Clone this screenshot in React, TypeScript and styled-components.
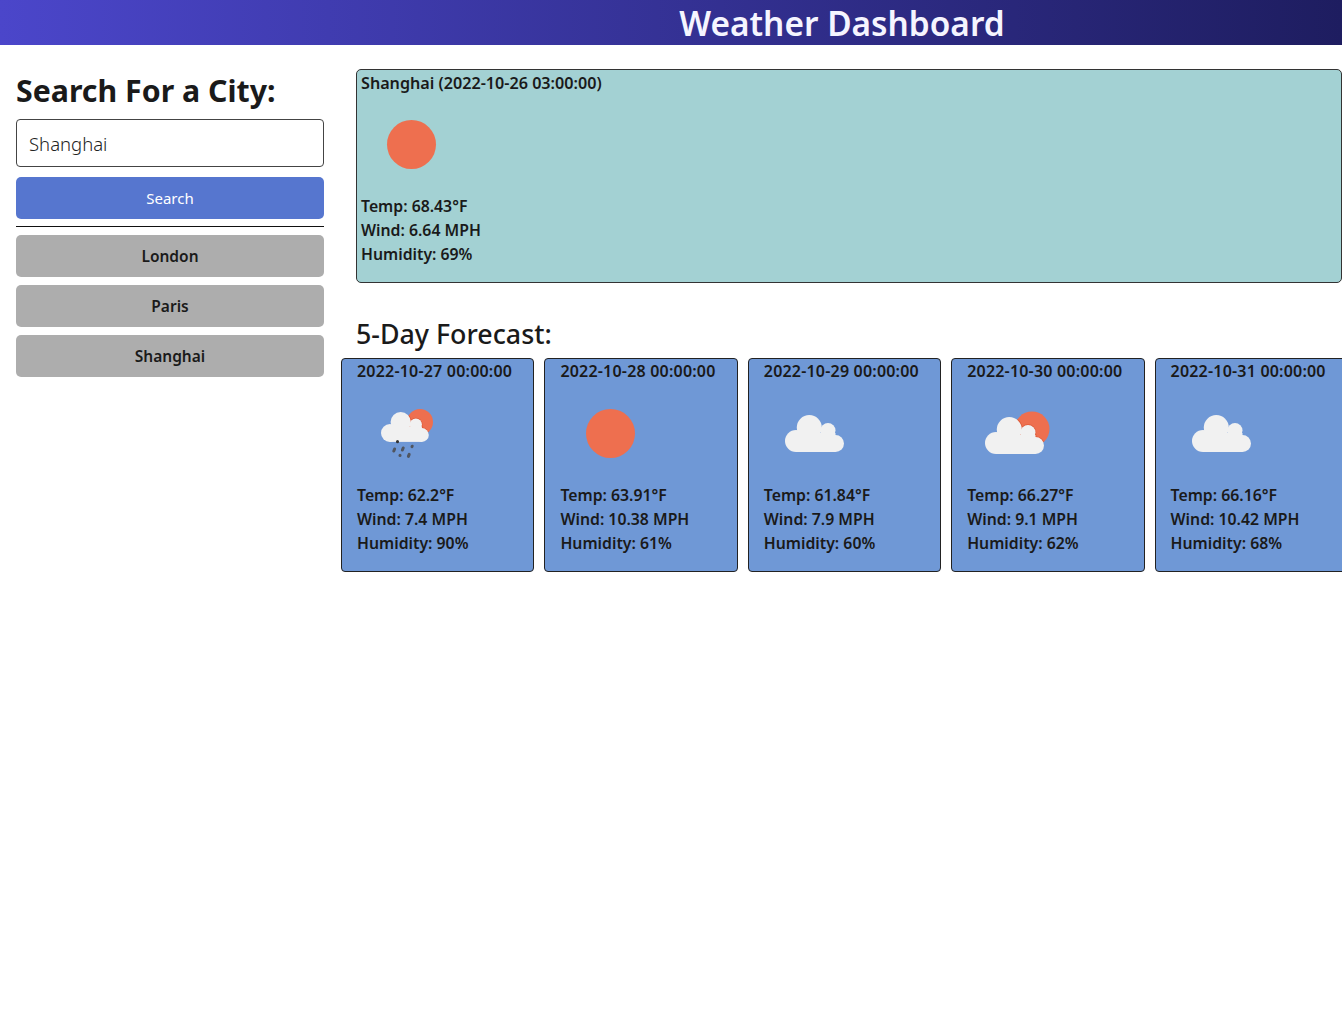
import React from "react";
import styled, { createGlobalStyle } from "styled-components";

const Global = createGlobalStyle`
  html, body { margin: 0; padding: 0; background: #fff; overflow-x: hidden; }
  body { font-family: "Noto Sans", "Open Sans", sans-serif; color: #1a1a1a; }
  * { box-sizing: border-box; }
`;

const Page = styled.div`
  width: 1342px;
  min-height: 1022px;
  overflow: hidden;
`;

const Header = styled.header`
  height: 45px;
  padding-left: 342px;
  display: flex;
  justify-content: center;
  align-items: center;
  background: linear-gradient(90deg, #4b46ca 0%, #1e1d60 100%);
`;

const Title = styled.h1`
  margin: 2px 0 0;
  font-size: 33.4px;
  line-height: 45px;
  font-weight: 600;
  color: #f5f5ff;
`;

const Layout = styled.div`
  display: grid;
  grid-template-columns: 341px 1008px;
  padding-top: 24px;
`;

const Sidebar = styled.aside`
  display: flex;
  flex-direction: column;
  width: 340px;
  padding: 0 16px;
`;

const SearchTitle = styled.h2`
  margin: 0 0 8px;
  height: 42px;
  font-size: 30.3px;
  line-height: 43px;
  font-weight: 700;
  white-space: nowrap;
`;

const CityInput = styled.input`
  height: 48px;
  width: 100%;
  padding: 0 12px;
  border: 1px solid #444;
  border-radius: 4px;
  font: 300 18.5px "Noto Sans", sans-serif;
  color: #222;
  background: #fff;
  outline: none;
`;

const SearchButton = styled.button`
  margin-top: 10px;
  height: 42px;
  border: 0;
  border-radius: 5px;
  background: #5676cf;
  color: #fff;
  font: 400 15px "Noto Sans", sans-serif;
`;

const Rule = styled.hr`
  width: 100%;
  margin: 7px 0 8px;
  border: 0;
  border-top: 1px solid #111;
`;

const CityList = styled.div`
  display: flex;
  flex-direction: column;
  gap: 8px;
`;

const CityButton = styled.button`
  height: 42px;
  border: 0;
  border-radius: 5px;
  background: #adadad;
  color: #1a1a1a;
  font: 600 15.5px "Noto Sans", sans-serif;
`;

const Main = styled.main`
  display: flex;
  flex-direction: column;
  min-width: 0;
`;

const TodayCard = styled.section`
  width: 986px;
  height: 214px;
  margin-left: 15px;
  padding: 0 4px;
  background: #a3d1d3;
  border: 1px solid #333;
  border-radius: 5px;
`;

const ForecastHeading = styled.h3`
  margin: 32px 0 4px 15px;
  height: 39px;
  font-size: 26.8px;
  line-height: 38px;
  font-weight: 500;
`;

const ForecastRow = styled.div`
  display: flex;
  gap: 10px;
`;

const ForecastCard = styled.article`
  flex: 0 0 193.4px;
  height: 214px;
  padding: 0 15px;
  background: #6f98d6;
  border: 1px solid #222;
  border-radius: 4px;
`;

const Line = styled.div`
  height: 24px;
  font-size: 15.8px;
  line-height: 24px;
  font-weight: 600;
  white-space: nowrap;
`;

const CityLine = styled(Line)`
  font-size: 16.15px;
  line-height: 26px;
`;

const DateLine = styled(Line)`
  font-size: 16px;
  letter-spacing: 0.2px;
`;

const IconSvg = styled.svg`
  display: block;
  width: 100px;
  height: 100px;
`;

const SUN = "#ee6f4f";
const EDGE = "#dd5a38";

const Sun = ({ cx = 50.5, cy = 50.5, r = 24.5 }: { cx?: number; cy?: number; r?: number }) => (
  <circle cx={cx} cy={cy} r={r} fill={SUN} />
);

const CloudShape = ({ transform }: { transform?: string }) => (
  <g transform={transform} fill="#f1f1f1">
    <circle cx="45.3" cy="44.5" r="12.5" />
    <circle cx="64" cy="47.5" r="7.5" />
    <circle cx="32" cy="58" r="11" />
    <circle cx="71.5" cy="60.5" r="8.5" />
    <rect x="32" y="50" width="39.5" height="19" />
  </g>
);

const SunBehindCloud = ({ id, cx, cy, r, transform }: { id: string; cx: number; cy: number; r: number; transform: string }) => (
  <>
    <defs>
      <clipPath id={id}>
        <circle cx={cx} cy={cy} r={r} />
      </clipPath>
    </defs>
    <Sun cx={cx} cy={cy} r={r} />
    <g clipPath={`url(#${id})`} stroke={EDGE} strokeWidth="1.6">
      <CloudShape transform={transform} />
    </g>
    <CloudShape transform={transform} />
  </>
);

const icons: Record<string, React.ReactNode> = {
  sun: <Sun />,
  cloud: <CloudShape />,
  partly: <SunBehindCloud id="clip-partly" cx={65} cy={46} r={17.5} transform="translate(-3 2)" />,
  rain: (
    <>
      <SunBehindCloud id="clip-rain" cx={63} cy={39} r={13} transform="translate(7 3) scale(.81)" />
      <g stroke="#50555f" strokeWidth="3" strokeLinecap="round">
        <path d="M40.5 58.4v.4" stroke="#333" />
        <path d="M37.6 66l-.8 2" />
        <path d="M46.2 65l-.8 2" />
        <path d="M55.2 63.2l-.2.4" />
        <path d="M43 72.2v.2" />
        <path d="M52.2 71.4l-.8 2" />
      </g>
    </>
  ),
};

const WeatherIcon = ({ kind }: { kind: string }) => (
  <IconSvg viewBox="0 0 100 100" role="img" aria-label={kind}>
    {icons[kind]}
  </IconSvg>
);

const forecast = [
  { date: "2022-10-27 00:00:00", icon: "rain", temp: "62.2", wind: "7.4", humidity: "90" },
  { date: "2022-10-28 00:00:00", icon: "sun", temp: "63.91", wind: "10.38", humidity: "61" },
  { date: "2022-10-29 00:00:00", icon: "cloud", temp: "61.84", wind: "7.9", humidity: "60" },
  { date: "2022-10-30 00:00:00", icon: "partly", temp: "66.27", wind: "9.1", humidity: "62" },
  { date: "2022-10-31 00:00:00", icon: "cloud", temp: "66.16", wind: "10.42", humidity: "68" },
];

export default function App() {
  return (
    <Page>
      <Global />
      <Header>
        <Title>Weather Dashboard</Title>
      </Header>
      <Layout>
        <Sidebar>
          <SearchTitle>Search For a City:</SearchTitle>
          <CityInput defaultValue="Shanghai" />
          <SearchButton>Search</SearchButton>
          <Rule />
          <CityList>
            {["London", "Paris", "Shanghai"].map((c) => (
              <CityButton key={c}>{c}</CityButton>
            ))}
          </CityList>
        </Sidebar>
        <Main>
          <TodayCard>
            <CityLine>Shanghai (2022-10-26 03:00:00)</CityLine>
            <WeatherIcon kind="sun" />
            <Line>Temp: 68.43°F</Line>
            <Line>Wind: 6.64 MPH</Line>
            <Line>Humidity: 69%</Line>
          </TodayCard>
          <ForecastHeading>5-Day Forecast:</ForecastHeading>
          <ForecastRow>
            {forecast.map((d) => (
              <ForecastCard key={d.date}>
                <DateLine>{d.date}</DateLine>
                <WeatherIcon kind={d.icon} />
                <Line>Temp: {d.temp}°F</Line>
                <Line>Wind: {d.wind} MPH</Line>
                <Line>Humidity: {d.humidity}%</Line>
              </ForecastCard>
            ))}
          </ForecastRow>
        </Main>
      </Layout>
    </Page>
  );
}
